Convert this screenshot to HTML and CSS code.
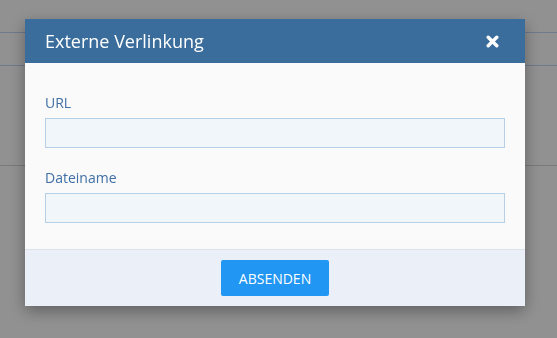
FILE: index.html
```html
<!DOCTYPE html>
<html lang="de">
<head>
    <meta charset="UTF-8">
    <meta name="viewport" content="width=device-width, initial-scale=1.0">
    <title>Externe Verlinkung</title>
    <link rel="stylesheet" href="styles.css">
</head>
<body>
    <div class="page">
        <div class="page-top"></div>
        <div class="page-bar"></div>
        <div class="page-row"></div>
    </div>

    <div class="backdrop">
        <div class="modal">
            <div class="modal-header">
                <span class="modal-title">Externe Verlinkung</span>
                <button class="modal-close" title="Schließen">
                    <svg width="13" height="13" viewBox="0 0 13 13">
                        <path d="M2.2 2.2 L10.8 10.8 M10.8 2.2 L2.2 10.8" stroke="#fff" stroke-width="3.4" stroke-linecap="round"/>
                    </svg>
                </button>
            </div>
            <div class="modal-body">
                <label class="field-label" for="url">URL</label>
                <input class="field-input" type="text" id="url">
                <label class="field-label" for="filename">Dateiname</label>
                <input class="field-input" type="text" id="filename">
            </div>
            <div class="modal-footer">
                <button class="btn-submit">ABSENDEN</button>
            </div>
        </div>
    </div>
</body>
</html>
```

FILE: styles.css
```css
body {
    margin: 0;
    font-family: 'Open Sans', 'Noto Sans', sans-serif;
    background-color: #fff;
    height: 338px;
    overflow: hidden;
}
.page-top {
    height: 32px;
    border-bottom: 1px solid #c0d8f5;
}
.page-bar {
    height: 32px;
    background-color: #fff;
    border-bottom: 1px solid #c0d8f5;
}
.page-row {
    height: 99px;
    border-bottom: 1px solid #d6d6d6;
}
.backdrop {
    position: fixed;
    top: 0;
    left: 0;
    right: 0;
    bottom: 0;
    background-color: rgba(0, 0, 0, 0.43);
}
.modal {
    width: 500px;
    margin: 19px 0 0 25px;
    background-color: #fafafa;
    box-shadow: 0 5px 15px rgba(0, 0, 0, 0.35);
}
.modal-header {
    height: 44px;
    background-color: #3a6d9b;
    display: flex;
    align-items: center;
    justify-content: space-between;
    padding: 0 26px 0 20px;
}
.modal-title {
    color: #fff;
    font-size: 18px;
    line-height: 24px;
}
.modal-close {
    background: none;
    border: none;
    padding: 0;
    width: 13px;
    height: 13px;
    display: flex;
    cursor: pointer;
}
.modal-body {
    padding: 30px 20px 26px;
    display: flex;
    flex-direction: column;
}
.field-label {
    color: #3f6fa6;
    font-size: 14px;
    line-height: 20px;
    margin-bottom: 5px;
}
.field-input {
    height: 30px;
    box-sizing: border-box;
    border: 1px solid #b5cfe6;
    background-color: #f1f6fb;
    margin: 0 0 20px;
    padding: 0 8px;
    font-family: inherit;
    font-size: 14px;
}
.field-input:last-child {
    margin-bottom: 0;
}
.modal-footer {
    border-top: 1px solid #dde3ea;
    background-color: #ebf0f8;
    padding: 10px 0;
    display: flex;
    justify-content: center;
}
.btn-submit {
    height: 36px;
    padding: 0 18px;
    border: none;
    border-radius: 2px;
    background-color: #2196f3;
    color: #fff;
    font-family: inherit;
    font-size: 14px;
    cursor: pointer;
}
```
